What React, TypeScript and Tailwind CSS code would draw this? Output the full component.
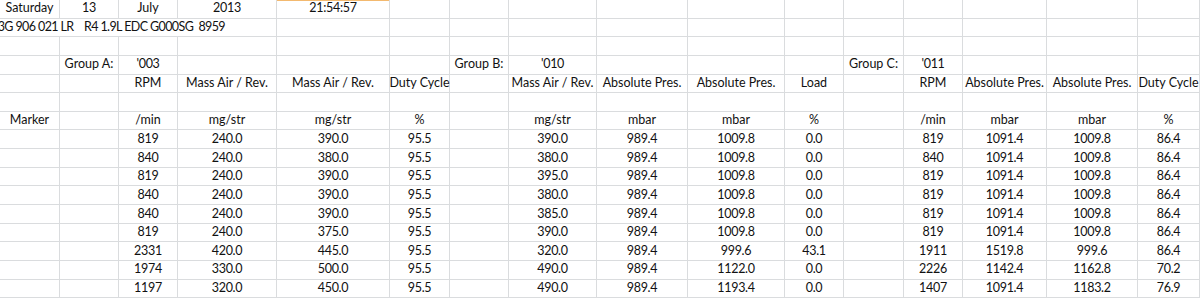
import React from 'react'

const cols = 'grid-cols-[60px_59px_59px_99px_113px_60px_59px_88px_91px_97px_59px_60px_59px_84px_91px_62px]'

const blank = (): string[] => Array(16).fill('')

const header: string[][] = [
  ['Saturday', '13', 'July', '2013', '21:54:57', '', '', '', '', '', '', '', '', '', '', ''],
  blank(), // part number row, drawn separately
  blank(),
  ['', 'Group A:', "'003", '', '', '', 'Group B:', "'010", '', '', '', 'Group C:', "'011", '', '', ''],
  ['', '', 'RPM', 'Mass Air / Rev.', 'Mass Air / Rev.', 'Duty Cycle', '', 'Mass Air / Rev.', 'Absolute Pres.', 'Absolute Pres.', 'Load', '', 'RPM', 'Absolute Pres.', 'Absolute Pres.', 'Duty Cycle'],
  blank(),
  ['Marker', '', '/min', 'mg/str', 'mg/str', '%', '', 'mg/str', 'mbar', 'mbar', '%', '', '/min', 'mbar', 'mbar', '%'],
]

// group A | group B | group C
const data: string[][] = [
  ['819', '240.0', '390.0', '95.5', '390.0', '989.4', '1009.8', '0.0', '819', '1091.4', '1009.8', '86.4'],
  ['840', '240.0', '380.0', '95.5', '380.0', '989.4', '1009.8', '0.0', '840', '1091.4', '1009.8', '86.4'],
  ['819', '240.0', '390.0', '95.5', '395.0', '989.4', '1009.8', '0.0', '819', '1091.4', '1009.8', '86.4'],
  ['840', '240.0', '390.0', '95.5', '380.0', '989.4', '1009.8', '0.0', '819', '1091.4', '1009.8', '86.4'],
  ['840', '240.0', '390.0', '95.5', '385.0', '989.4', '1009.8', '0.0', '819', '1091.4', '1009.8', '86.4'],
  ['819', '240.0', '375.0', '95.5', '390.0', '989.4', '1009.8', '0.0', '819', '1091.4', '1009.8', '86.4'],
  ['2331', '420.0', '445.0', '95.5', '320.0', '989.4', '999.6', '43.1', '1911', '1519.8', '999.6', '86.4'],
  ['1974', '330.0', '500.0', '95.5', '490.0', '989.4', '1122.0', '0.0', '2226', '1142.4', '1162.8', '70.2'],
  ['1197', '320.0', '450.0', '95.5', '490.0', '989.4', '1193.4', '0.0', '1407', '1091.4', '1183.2', '76.9'],
]

const rows: string[][] = [
  ...header,
  ...data.map(d => ['', '', ...d.slice(0, 4), '', ...d.slice(4, 8), '', ...d.slice(8)]),
]

const cell = 'flex items-center justify-center whitespace-nowrap border-r border-b border-[#dadcde]'
const isNum = (s: string) => /^[\d.':]+$/.test(s)

export default function App() {
  return (
    <div className="w-[1200px] h-[299px] overflow-hidden bg-white text-[#111] font-['Lato','Liberation_Sans',sans-serif] text-[12.5px]">
      <div className={`grid ${cols} grid-rows-[repeat(16,18.65px)]`}>
        {rows.map((row, r) => {
          if (r === 1) {
            return (
              <React.Fragment key={r}>
                <div className="col-span-4 flex items-center overflow-hidden whitespace-pre tracking-[-0.6px] border-r border-b border-[#dadcde]">
                  <span className="-ml-[9px]">03G 906 021 LR    R4 1.9L EDC G000SG  8959</span>
                </div>
                {row.slice(4).map((_, c) => (
                  <div key={c} className={cell} />
                ))}
              </React.Fragment>
            )
          }
          return row.map((text, c) => (
            <div
              key={`${r}-${c}`}
              className={`${cell} ${isNum(text) ? 'tracking-[-0.3px]' : ''} ${r === 0 && c === 4 ? 'shadow-[inset_0_1px_0_#f3b96f]' : ''}`}
            >
              {text}
            </div>
          ))
        })}
      </div>
    </div>
  )
}
